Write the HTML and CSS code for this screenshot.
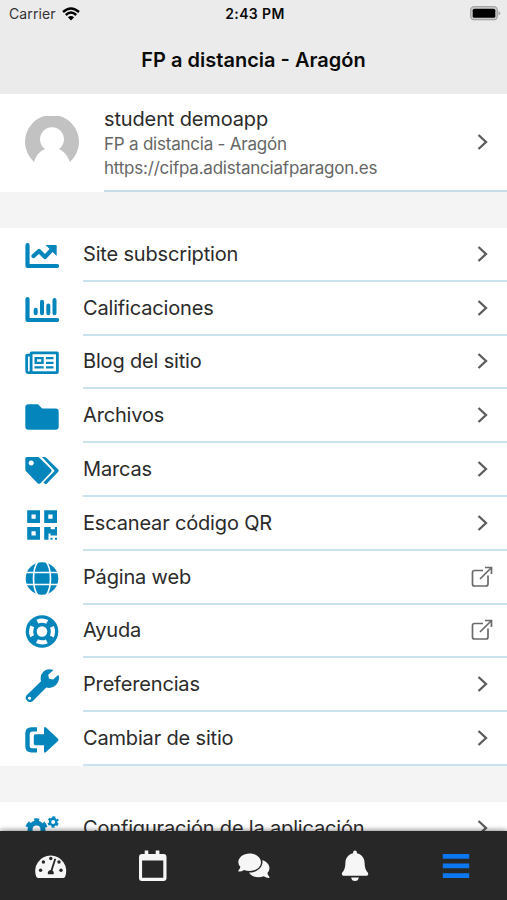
FILE: index.html
```html
<!DOCTYPE html>
<html lang="es">
<head>
    <meta charset="UTF-8">
    <title>FP a distancia - Aragón</title>
    <link rel="stylesheet" href="styles.css">
</head>
<body>
<svg class="defs">
    <symbol id="arrow" viewBox="0 0 12 18">
        <path d="M1.500 2l7.500 7-7.500 7" fill="none" stroke="#5c5c5c" stroke-width="2.300"/>
    </symbol>
    <symbol id="open" viewBox="0 0 22 22">
        <path d="M12 4.500H3.500a2 2 0 0 0-2 2V18a2 2 0 0 0 2 2H15a2 2 0 0 0 2-2V9.500M9 13L20 2M14 1.500h6.500V8" fill="none" stroke="#6a6a6a" stroke-width="1.700"/>
    </symbol>
</svg>
<div class="app">
    <header class="header">
        <div class="status">
            <div class="carrier">
                <span class="carrier-name">Carrier</span>
                <svg class="wifi" viewBox="0 0 18 14">
                    <path d="M1 5Q9-2.200 17 5M3.800 8Q9 3.200 14.200 8" fill="none" stroke="#000" stroke-width="2.400"/>
                    <path d="M9 13.500L5.900 10.300Q9 7.700 12.100 10.300z"/>
                </svg>
            </div>
            <span class="time">2:43 PM</span>
            <svg class="battery" viewBox="0 0 31 15">
                <rect x=".7" y=".7" width="26.600" height="13" rx="3.500" fill="#ccc" stroke="#a5a5a5" stroke-width="1.300"/>
                <rect x="2.700" y="2.700" width="22.600" height="9" rx="1.500"/>
                <path d="M28.500 5q3.500 2.200 0 4.500z" fill="#a5a5a5"/>
            </svg>
        </div>
        <h1 class="title">FP a distancia - Aragón</h1>
    </header>

    <main class="content">
        <section class="user">
            <svg class="avatar" viewBox="0 0 54 54">
                <path d="M9 46A27 27 0 1 1 45 46Q41 36 34 33A12 12 0 1 0 20 33Q12 36 9 46z" fill="#c2c2c2"/>
            </svg>
            <div class="user-body">
                <div class="user-text">
                    <h2><span class="user-name">student demoapp</span></h2>
                    <p><span class="user-site">FP a distancia - Aragón</span></p>
                    <p><span class="user-url">https://cifpa.adistanciafparagon.es</span></p>
                </div>
                <svg class="arrow"><use href="#arrow"/></svg>
            </div>
        </section>

        <ul class="menu">
            <li class="item">
                <svg class="icon" viewBox="0 0 34 34">
                    <path d="M2.500 7V28H32" class="line"/>
                    <path d="M8.500 18l5.500-5 6 6 7-7.500" class="line"/>
                    <path d="M20.500 7H30.500a1.200 1.200 0 0 1 1.200 1.200V18z"/>
                </svg>
                <div class="item-body"><span class="label">Site subscription</span><svg class="arrow"><use href="#arrow"/></svg></div>
            </li>
            <li class="item">
                <svg class="icon" viewBox="0 0 34 34">
                    <path d="M2.500 7V28H32" class="line"/>
                    <path d="M10.700 17.800V21.200M17 9.800V21.200M23.300 13.500V21.200M29.500 8V21.200" class="line bars"/>
                </svg>
                <div class="item-body"><span class="label">Calificaciones</span><svg class="arrow"><use href="#arrow"/></svg></div>
            </li>
            <li class="item">
                <svg class="icon" viewBox="0 0 34 34">
                    <path fill-rule="evenodd" d="M6.500 6.500H32a1.800 1.800 0 0 1 1.800 1.800V27a2 2 0 0 1-2 2H3.500A3.200 3.200 0 0 1 .3 26V10.500A1.800 1.800 0 0 1 2.100 8.700H4.700V8.300A1.800 1.800 0 0 1 6.500 6.500zM7.500 9.300V26.200H31V9.300zM3 11.500V25.500q0 1 .9 1t.8-1V11.500z"/>
                    <path fill-rule="evenodd" d="M9.500 12H18.700V19H9.500zM12 14.300V16.800H16.300V14.300z"/>
                    <path d="M21 12h7.500v2.300H21zM21 16.700h7.500V19H21zM9.500 21.300h9.200v2.300H9.500zM21 21.300h7.500v2.300H21z"/>
                </svg>
                <div class="item-body"><span class="label">Blog del sitio</span><svg class="arrow"><use href="#arrow"/></svg></div>
            </li>
            <li class="item">
                <svg class="icon" viewBox="0 0 34 34">
                    <path d="M3.500 5.300H13L17.200 9.500H30.500A3.200 3.200 0 0 1 33.700 12.700V27.500A3.200 3.200 0 0 1 30.500 30.700H3.500A3.200 3.200 0 0 1 .3 27.500V8.500A3.200 3.200 0 0 1 3.500 5.300z"/>
                </svg>
                <div class="item-body"><span class="label">Archivos</span><svg class="arrow"><use href="#arrow"/></svg></div>
            </li>
            <li class="item">
                <svg class="icon" viewBox="0 0 34 34">
                    <path fill-rule="evenodd" d="M2 4H12.500Q13.700 4 14.700 5L26 16.200Q27.500 17.700 26 19.200L15.500 30.200Q14 31.500 12.500 30.200L1.300 18.500Q.3 17.500.3 16V5.700Q.3 4 2 4zM6.200 7.400a2.600 2.600 0 1 0 .01 0z"/>
                    <path d="M17 4H19.500Q20.500 4 21.500 5L33 16.300Q34.300 17.700 33 19.100L22 30.500Q20.800 31.500 19.500 30.500L18.500 29.500 29 18.500Q29.700 17.700 29 17z"/>
                </svg>
                <div class="item-body"><span class="label">Marcas</span><svg class="arrow"><use href="#arrow"/></svg></div>
            </li>
            <li class="item">
                <svg class="icon" viewBox="0 0 34 34">
                    <path fill-rule="evenodd" d="M2.200 3.300H15V16H2.200zM6.500 7.500V11.800H10.700V7.500zM19.200 3.300H32V16H19.200zM23.300 7.500V11.800H27.600V7.500zM2.200 20H15V32.700H2.200zM6.500 24.200V28.500H10.700V24.200z"/>
                    <path d="M19.200 20h6.500v2.200h4.200V20H32v8.600h-6.500v-2.200h-2v6.300h-4.300zM25.500 30.700h2v2h-2zM30 30.700h2v2h-2z"/>
                </svg>
                <div class="item-body"><span class="label">Escanear código QR</span><svg class="arrow"><use href="#arrow"/></svg></div>
            </li>
            <li class="item">
                <svg class="icon" viewBox="0 0 34 34">
                    <circle cx="17" cy="17.500" r="16.300"/>
                    <path d="M.5 11.500H33.500M.5 23.500H33.500M13 .5C7 8 7 27 13 34.500M21 .5C27 8 27 27 21 34.500" fill="none" stroke="#fff" stroke-width="1.600"/>
                </svg>
                <div class="item-body"><span class="label">Página web</span><svg class="open"><use href="#open"/></svg></div>
            </li>
            <li class="item">
                <svg class="icon" viewBox="0 0 34 34">
                    <circle cx="17" cy="17.500" r="16.300"/>
                    <circle cx="17" cy="17.500" r="5.300" fill="#fff"/>
                    <circle cx="17" cy="17.500" r="10.900" fill="none" stroke="#fff" stroke-width="4.200" stroke-dasharray="10.200 6.922" stroke-dashoffset="5.100"/>
                </svg>
                <div class="item-body"><span class="label">Ayuda</span><svg class="open"><use href="#open"/></svg></div>
            </li>
            <li class="item">
                <svg class="icon" viewBox="0 0 34 34">
                    <path fill-rule="evenodd" d="M27.800 1.700Q22 .1 18.300 3.700T16 13.200L1.400 27.500A4.300 4.300 0 0 0 7.300 33.400L21.300 19.500Q27 21 31 17T33.700 7.600Q33.400 6.500 32.500 7.400L28.200 11.600 24 10.700 23.200 6.800 27.700 2.800Q28.700 1.900 27.800 1.700zM4.500 28.700a1.600 1.600 0 1 1-.01 0z"/>
                </svg>
                <div class="item-body"><span class="label">Preferencias</span><svg class="arrow"><use href="#arrow"/></svg></div>
            </li>
            <li class="item">
                <svg class="icon" viewBox="0 0 34 34">
                    <path d="M12 5.300V9.500H7Q4.700 9.500 4.700 12V24Q4.700 26.300 7 26.300H12V30.500H6.500Q.3 30.500.3 24.300V11.500Q.3 5.300 6.500 5.300z"/>
                    <path d="M20.800 5.300L33 16.700Q34 17.800 33 19L20.800 30.300Q19 31.300 19 29.300V23.300H10.500Q8.800 23.300 8.800 21.600V14Q8.800 12.300 10.500 12.300H19V6.500Q19 4.300 20.800 5.300z"/>
                </svg>
                <div class="item-body"><span class="label">Cambiar de sitio</span><svg class="arrow"><use href="#arrow"/></svg></div>
            </li>
        </ul>

        <ul class="menu">
            <li class="item">
                <svg class="icon" viewBox="0 0 34 34">
                    <circle cx="11.500" cy="17.500" r="6.500" fill="none" stroke="#0486bd" stroke-width="5"/>
                    <circle cx="11.500" cy="17.500" r="9" fill="none" stroke="#0486bd" stroke-width="4.500" stroke-dasharray="5 4.425" stroke-dashoffset="2.500" transform="rotate(-90 11.500 17.500)"/>
                    <circle cx="28.200" cy="10" r="3.200" fill="none" stroke="#0486bd" stroke-width="2.400"/>
                    <circle cx="28.200" cy="10" r="4.500" fill="none" stroke="#0486bd" stroke-width="2.400" stroke-dasharray="2.600 2.112" stroke-dashoffset="1.300" transform="rotate(-30 28.200 10)"/>
                </svg>
                <div class="item-body"><span class="label">Configuración de la aplicación</span><svg class="arrow"><use href="#arrow"/></svg></div>
            </li>
        </ul>
    </main>

    <nav class="tabs">
        <div class="tab">
            <svg viewBox="0 0 34 34">
                <path d="M4.500 29Q3 29 2.200 27.500A15.500 15.500 0 1 1 31.200 27.500Q30.500 29 29 29z"/>
                <g fill="#272727">
                    <circle cx="6.600" cy="21.300" r="1.700"/><circle cx="9.400" cy="13" r="1.700"/><circle cx="16.800" cy="9.500" r="1.700"/><circle cx="25" cy="13" r="1.700"/><circle cx="27" cy="21.300" r="1.700"/>
                    <path d="M20.400 9.500l1.700.5-3.600 11.500q1.900 1.300 1.200 3.800h-5.800q-.8-3.600 2.800-4.400z"/>
                </g>
            </svg>
        </div>
        <div class="tab">
            <svg viewBox="0 0 34 34">
                <path fill-rule="evenodd" d="M9.700 1.500h3.600V5h7.400V1.500h3.700V5h4A3 3 0 0 1 31.500 8V29a3 3 0 0 1-3 3H7a3 3 0 0 1-3-3V8a3 3 0 0 1 3-3h2.700zM7.100 11.500V28.800H28.300V11.500z"/>
            </svg>
        </div>
        <div class="tab">
            <svg viewBox="0 0 34 34">
                <path d="M12.700 4.500C19.200 4.500 24 8.500 24 13.300S19.200 22 12.700 22Q9.500 22 7 20.900Q4.500 22.800 1.500 22.500Q1 22.200 1.500 21.500Q3.200 19.500 3.400 17.800Q1.300 15.800 1.300 13.300C1.300 8.500 6.200 4.500 12.700 4.500z"/>
                <path d="M25.400 10.900C30 12.400 32.600 16 32.500 19.300Q32.400 22 30.400 24Q30.700 26.300 32.500 28Q32.800 28.700 32 28.900Q29.300 29 26.800 27.200C21 29.500 14.500 28 12 23.500C20 23.700 26.500 18.500 25.400 10.900z"/>
            </svg>
        </div>
        <div class="tab">
            <svg viewBox="0 0 34 34">
                <path d="M15.100 3.500a1.900 1.900 0 0 1 3.800 0V4.200C23.600 5.200 26.600 9 26.600 14Q26.600 20.500 30.100 24Q30.600 26.800 28.600 26.800H5.400Q3.400 26.500 3.900 24Q7.400 20.500 7.400 14C7.400 9 10.400 5.200 15.100 4.200zM13.200 28.500H20.800Q20.400 32 17 32T13.200 28.500z"/>
            </svg>
        </div>
        <div class="tab active">
            <svg viewBox="0 0 34 34">
                <path d="M3.800 5H30.200V9.700H3.800zM3.800 14.600H30.200V19.300H3.800zM3.800 24.200H30.200V28.900H3.800z"/>
            </svg>
        </div>
    </nav>
</div>
</body>
</html>
```
FILE: styles.css
```css
* {
    box-sizing: border-box;
    margin: 0;
    padding: 0;
}
body {
    font-family: Inter, Roboto, sans-serif;
    color: #2b2b2b;
    background: #f4f4f4;
}
ul {
    list-style: none;
}
svg {
    display: block;
    flex: none;
}
.defs {
    display: none;
}
.app {
    height: 900px;
    display: flex;
    flex-direction: column;
    overflow: hidden;
}

/* header */
.header {
    height: 94px;
    flex: none;
    background: #ebebeb;
    color: #0b0b0b;
}
.status {
    height: 27px;
    padding: 0 6px 0 9px;
    display: grid;
    grid-template-columns: 1fr auto 1fr;
    align-items: center;
}
.carrier {
    display: flex;
    align-items: center;
    gap: 6px;
    font-size: 14px;
    letter-spacing: 0.1px;
    color: #333;
}
.wifi {
    width: 18px;
    height: 14px;
}
.time {
    font-size: 14px;
    font-weight: 600;
    letter-spacing: 0.4px;
}
.battery {
    width: 31px;
    height: 15px;
    justify-self: end;
}
.title {
    font-size: 20px;
    font-weight: 600;
    line-height: 66px;
    text-align: center;
    letter-spacing: 0;
}

/* content */
.content {
    flex: 1;
    min-height: 0;
    overflow: hidden;
}
.user {
    height: 98px;
    padding-left: 25px;
    display: flex;
    align-items: center;
    gap: 25px;
    background: #fff;
}
.avatar {
    width: 54px;
    height: 54px;
}
.user-body {
    flex: 1;
    height: 98px;
    padding-right: 18px;
    display: flex;
    align-items: center;
    justify-content: space-between;
    border-bottom: 2px solid #c9dce9;
}
.user-text {
    padding-top: 2px;
}
.user-text h2 {
    font-size: 20px;
    font-weight: 400;
    line-height: 26px;
    letter-spacing: -0.14px;
}
.user-text p {
    font-size: 17px;
    line-height: 24px;
    color: #666;
    letter-spacing: -0.22px;
}
.arrow {
    width: 12px;
    height: 18px;
}
.open {
    width: 22px;
    height: 22px;
    margin-right: -4px;
}
.menu {
    margin-top: 36px;
    background: #fff;
}
.item {
    height: 53.8px;
    padding-left: 25px;
    display: flex;
    align-items: center;
    gap: 24px;
}
.icon {
    width: 34px;
    height: 34px;
    fill: #0486bd;
}
.icon .line {
    fill: none;
    stroke: #0486bd;
    stroke-width: 4.2;
    stroke-linecap: round;
    stroke-linejoin: round;
}
.icon .bars {
    stroke-width: 4;
}
.item-body {
    flex: 1;
    height: 53.8px;
    padding-right: 18px;
    display: flex;
    align-items: center;
    justify-content: space-between;
    border-bottom: 2px solid #c9e4ef;
}
.label {
    font-size: 20px;
    letter-spacing: -0.17px;
}

/* bottom tabs */
.tabs {
    position: relative;
    height: 69px;
    flex: none;
    display: flex;
    background: #272727;
    box-shadow: 0 -1px 5px rgba(0, 0, 0, .45);
}
.tab {
    flex: 1;
    display: flex;
    justify-content: center;
    padding-top: 18px;
}
.tab svg {
    width: 34px;
    height: 34px;
    fill: #f6f6f6;
}
.tab.active svg {
    fill: #0b78f2;
}
```
